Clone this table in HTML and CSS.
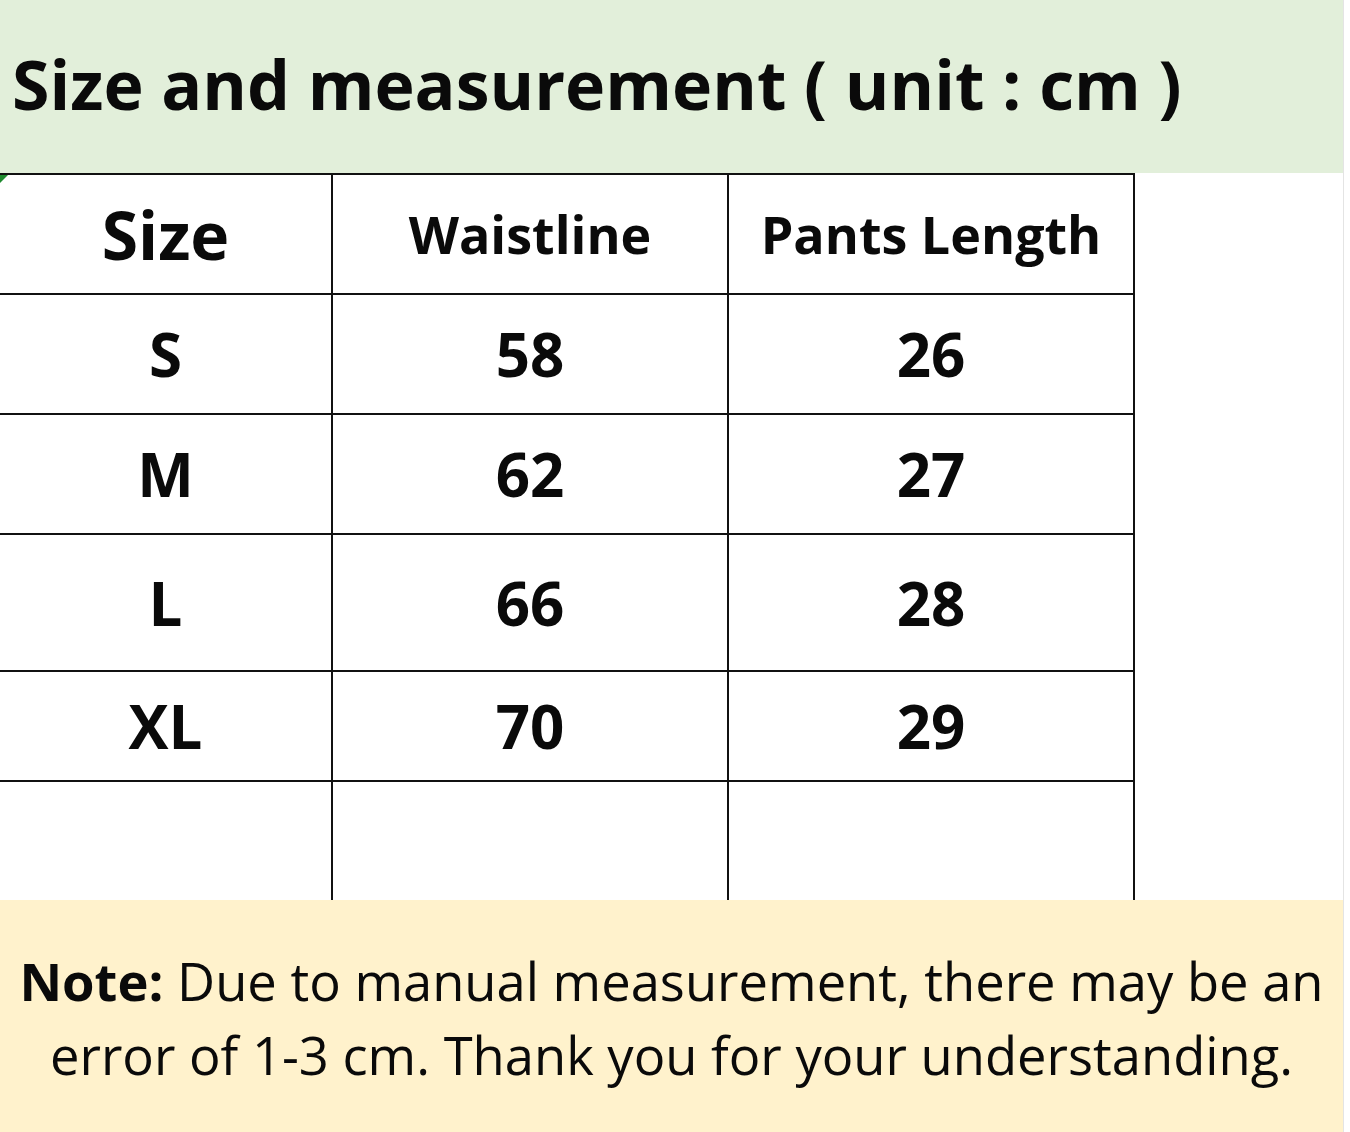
FILE: index.html
```html
<!DOCTYPE html>
<html lang="en">
<head>
<meta charset="utf-8">
<title>Size and measurement</title>
<link rel="stylesheet" href="styles.css">
</head>
<body>
<div class="sheet">
  <header class="title-bar">
    <h1 class="title">Size and measurement ( unit : cm )</h1>
  </header>
  <section class="table-area">
    <div class="size-table">
      <div class="cell head head-size">Size</div>
      <div class="cell head">Waistline</div>
      <div class="cell head">Pants Length</div>

      <div class="cell r1">S</div>
      <div class="cell r1">58</div>
      <div class="cell r1">26</div>

      <div class="cell r2">M</div>
      <div class="cell r2">62</div>
      <div class="cell r2">27</div>

      <div class="cell r3">L</div>
      <div class="cell r3">66</div>
      <div class="cell r3">28</div>

      <div class="cell r4">XL</div>
      <div class="cell r4">70</div>
      <div class="cell r4">29</div>

      <div class="cell last"></div>
      <div class="cell last"></div>
      <div class="cell last"></div>
    </div>
    <span class="marker"></span>
  </section>
  <footer class="note">
    <p class="note-text"><strong>Note:</strong> Due to manual measurement, there may be an<br>error of 1-3 cm. Thank you for your understanding.</p>
  </footer>
</div>
</body>
</html>
```

FILE: styles.css
```css
html, body {
  margin: 0;
  padding: 0;
  background: #ffffff;
}

body {
  width: 1350px;
  height: 1132px;
  overflow: hidden;
  font-family: "Open Sans", "Noto Sans", "DejaVu Sans", sans-serif;
  color: #0a0a0a;
}

.sheet {
  width: 1343px;
  height: 1132px;
  border-right: 1px solid #e4e4e4;
  display: flex;
  flex-direction: column;
}

.title-bar {
  height: 173px;
  background: #e2efda;
  display: flex;
  align-items: center;
  padding-left: 12px;
  padding-bottom: 6px;
  box-sizing: border-box;
}

.title {
  margin: 0;
  font-size: 68px;
  font-weight: 700;
  line-height: 1;
  white-space: nowrap;
}

.table-area {
  position: relative;
  height: 727px;
  background: #ffffff;
}

.size-table {
  width: 1135px;
  display: grid;
  grid-template-columns: 333px 396px 406px;
  grid-template-rows: 120px 120px 120px 137px 110px 118px;
  border-top: 2px solid #111;
}

.cell {
  box-sizing: border-box;
  border-right: 2px solid #111;
  border-bottom: 2px solid #111;
  display: flex;
  align-items: center;
  justify-content: center;
  font-weight: 700;
  font-size: 60px;
  line-height: 1;
}

.cell.last {
  border-bottom: none;
}

.head {
  font-size: 52px;
}

.head-size {
  font-size: 66px;
}

.marker {
  position: absolute;
  left: 0;
  top: 2px;
  width: 0;
  height: 0;
  border-top: 8px solid #1e8a2e;
  border-right: 8px solid transparent;
}

.note {
  flex: 1;
  background: #fff2cc;
  display: flex;
  align-items: center;
  justify-content: center;
  padding-top: 4px;
  box-sizing: border-box;
}

.note-text {
  margin: 0;
  text-align: center;
  font-size: 52.5px;
  line-height: 74px;
  font-weight: 400;
  white-space: nowrap;
}

.note-text strong {
  font-weight: 700;
}
```
